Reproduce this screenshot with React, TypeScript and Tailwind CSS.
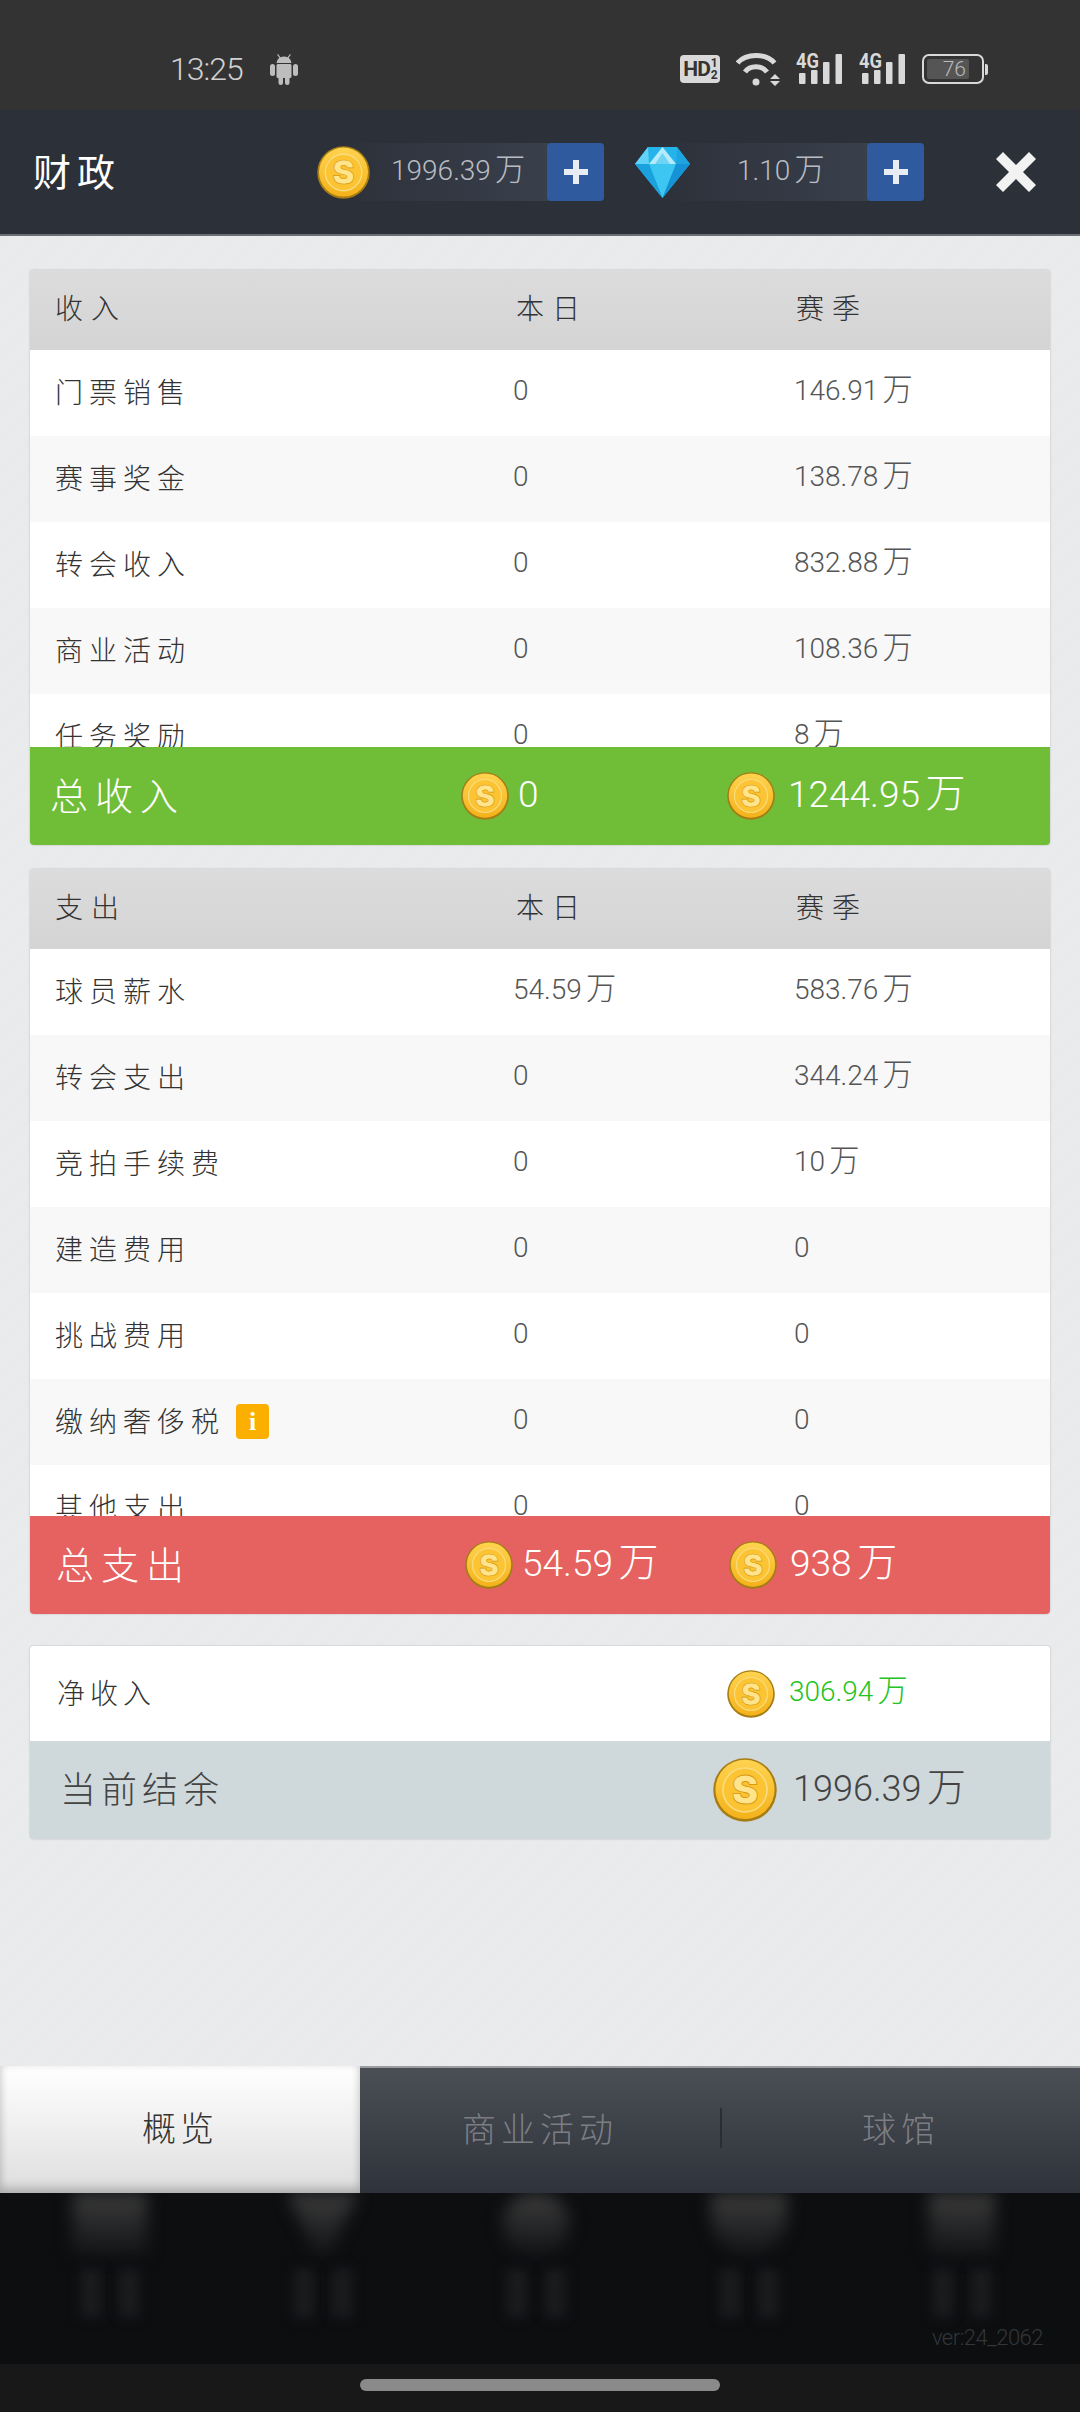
import React from 'react';

const cjk = "font-['Noto_Sans_CJK_SC',sans-serif]";
const num = "font-['Roboto','Noto_Sans_CJK_SC',sans-serif] font-light";

const incomeRows = [
  ['门票销售', '0', '146.91万'],
  ['赛事奖金', '0', '138.78万'],
  ['转会收入', '0', '832.88万'],
  ['商业活动', '0', '108.36万'],
  ['任务奖励', '0', '8万'],
];

const spendRows = [
  ['球员薪水', '54.59万', '583.76万'],
  ['转会支出', '0', '344.24万'],
  ['竞拍手续费', '0', '10万'],
  ['建造费用', '0', '0'],
  ['挑战费用', '0', '0'],
  ['缴纳奢侈税', '0', '0'],
  ['其他支出', '0', '0'],
];

const Coin: React.FC<{ size: number }> = ({ size }) => (
  <svg width={size} height={size} viewBox="0 0 48 48" className="shrink-0">
    <defs>
      <linearGradient id="coinFill" x1="0" y1="0" x2="0" y2="1">
        <stop offset="0" stopColor="#ffd34f" />
        <stop offset="1" stopColor="#f4b21a" />
      </linearGradient>
    </defs>
    <circle cx="24" cy="24" r="23.8" fill="#a67c14" />
    <circle cx="24" cy="23.6" r="22.2" fill="url(#coinFill)" />
    <circle cx="24" cy="24" r="16.5" fill="#fcc433" stroke="#f8dc82" strokeWidth="1.2" />
    <text x="24" y="34.5" textAnchor="middle" fontSize="30" fontWeight="900" fontFamily="Inter, sans-serif" fill="#ffe48c" stroke="#d8980f" strokeWidth="0.6">S</text>
  </svg>
);

const Gem = () => (
  <svg width="55" height="52" viewBox="0 0 55 52" className="shrink-0">
    <polygon points="13,1 42,1 55,18 27.5,52 0,18" fill="#25b4ea" />
    <polygon points="13,1 0,18 14,18" fill="#62d3f6" />
    <polygon points="42,1 55,18 41,18" fill="#1ea5e0" />
    <polygon points="27.5,1 14,18 41,18" fill="#b5ebfb" />
    <polygon points="27.5,7 20,18 35,18" fill="#6fd4f4" />
    <polygon points="14,18 41,18 27.5,52" fill="#3ec6f2" />
    <polygon points="0,18 14,18 27.5,52" fill="#1aa2df" />
    <polygon points="41,18 55,18 27.5,52" fill="#1593d4" />
  </svg>
);

const AndroidIcon = () => (
  <svg width="28" height="32" viewBox="0 0 28 32" fill="#bdbdbd" className="shrink-0">
    <path d="M8 1l2.4 3.2a9 9 0 0 1 7.2 0L20 1l.9.7-2.2 3A7.6 7.6 0 0 1 21.5 10h-15a7.6 7.6 0 0 1 2.8-5.3l-2.2-3z" />
    <rect x="6.5" y="11" width="15" height="14" rx="1.5" />
    <rect x="0" y="11" width="5" height="12" rx="2.5" />
    <rect x="23" y="11" width="5" height="12" rx="2.5" />
    <rect x="8.5" y="23" width="4.5" height="9" rx="2.2" />
    <rect x="15" y="23" width="4.5" height="9" rx="2.2" />
  </svg>
);

const PlusButton = () => (
  <div className="w-[57px] h-[58px] rounded-[4px] bg-[#2f5a9e] flex items-center justify-center shrink-0">
    <svg width="24" height="24" viewBox="0 0 24 24">
      <path d="M9 0h6v9h9v6h-9v9H9v-9H0V9h9z" fill="#e8edf5" />
    </svg>
  </div>
);

const Amount: React.FC<{ value: string; className?: string }> = ({ value, className }) => {
  const hasUnit = value.endsWith('万');
  return (
    <span className={`${num} whitespace-nowrap leading-none ${className ?? ''}`}>
      {hasUnit ? value.slice(0, -1) : value}
      {hasUnit && <span className="ml-[0.14em] text-[1.08em]">万</span>}
    </span>
  );
};

const Wallet: React.FC<{ icon: React.ReactNode; value: string; textPad: string }> = ({ icon, value, textPad }) => (
  <div className="flex items-center">
    <div className="relative z-10">{icon}</div>
    <div className="flex w-[259px] h-[58px] items-center justify-between bg-gradient-to-r from-[#2d313a] to-[#3c4451] rounded-r-[4px] -ml-[25px]">
      <Amount value={value} className={`${textPad} pb-[4px] text-[28px] text-[#b9bdc3]`} />
      <PlusButton />
    </div>
  </div>
);

const StatusIcons = () => (
  <div className="flex items-center gap-[16px] text-[#d9d9d9]">
    <div className="w-[40px] h-[28px] bg-[#d9d9d9] rounded-[4px] flex items-center justify-center text-[#333] font-['Roboto',sans-serif] font-bold text-[21px] leading-none tracking-[-1px]">
      HD<span className="flex flex-col text-[12px] leading-[12px] ml-[1px]"><span>1</span><span>2</span></span>
    </div>
    <svg width="44" height="33" viewBox="0 0 44 33" fill="none" stroke="#d9d9d9" strokeWidth="5">
      <path d="M1.5 10C10 0 30 0 38.5 10" />
      <path d="M9 19C14 12 26 12 31 19" />
      <circle cx="20" cy="29" r="3.5" fill="#d9d9d9" stroke="none" />
      <path d="M34 26l5-5 5 5zM34 28l5 5 5-5z" fill="#d9d9d9" stroke="none" />
    </svg>
    {[0, 1].map((i) => (
      <svg key={i} width="46" height="32" viewBox="0 0 46 32" className="mr-[1px] overflow-visible">
        <text x="0" y="15" fontSize="21" fontWeight="700" fontFamily="Roboto, sans-serif" fill="#d9d9d9" textLength="23" lengthAdjust="spacingAndGlyphs">4G</text>
        <rect x="3" y="20" width="6.5" height="11" rx="1" fill="#d9d9d9" />
        <rect x="15" y="17" width="6.5" height="14" rx="1" fill="#d9d9d9" />
        <rect x="27" y="9" width="6.5" height="22" rx="1" fill="#d9d9d9" />
        <rect x="39.5" y="1" width="6.5" height="30" rx="1" fill="#d9d9d9" />
      </svg>
    ))}
    <div className="flex items-center">
      <div className="w-[62px] h-[30px] border-[2px] border-[#d9d9d9] rounded-[7px] p-[3px] flex">
        <div className="w-[42px] bg-[#555] rounded-[2px] flex items-center justify-end pr-[3px] text-[#bbb] font-['Roboto',sans-serif] font-light text-[21px] leading-none">76</div>
      </div>
      <div className="w-[3px] h-[11px] bg-[#d9d9d9] rounded-r-[2px] ml-[1px]" />
    </div>
  </div>
);

const Row: React.FC<{ cells: string[]; odd: boolean; info?: boolean }> = ({ cells, odd, info }) => (
  <div className={`grid grid-cols-[483px_281px_1fr] items-center h-[86px] shrink-0 pb-[5px] ${odd ? 'bg-[#f8f8f8]' : 'bg-white'}`}>
    <div className={`${cjk} font-light pl-[25px] text-[28px] tracking-[6px] text-[#333] flex items-center leading-none`}>
      {cells[0]}
      {info && <div className="ml-[11px] mt-[4px] w-[33px] h-[35px] rounded-[4px] bg-[#fbb000] flex items-center justify-center text-white font-['Liberation_Serif',serif] font-bold text-[26px] tracking-normal">i</div>}
    </div>
    <Amount value={cells[1]} className="text-[28px] text-[#555]" />
    <Amount value={cells[2]} className="text-[28px] text-[#555]" />
  </div>
);

const TableHeader: React.FC<{ title: string }> = ({ title }) => (
  <div className={`${cjk} grid grid-cols-[486px_280px_1fr] items-center h-[80px] pb-[6px] bg-gradient-to-b from-[#dcdcdc] to-[#d4d4d4] text-[#333] text-[28px] tracking-[8px] leading-none font-light`}>
    <span className="pl-[25px]">{title}</span>
    <span>本日</span>
    <span>赛季</span>
  </div>
);

const TotalBar: React.FC<{ label: string; color: string; cols: string; today: string; season: string; pad: string }> = ({ label, color, cols, today, season, pad }) => (
  <div className={`grid ${cols} items-center h-[98px] shrink-0 ${color} text-white`}>
    <span className={`${cjk} ${pad} tracking-[7px] pb-[5px] font-light text-[38px] leading-none`}>{label}</span>
    <div className="flex items-center gap-[9px]">
      <Coin size={48} />
      <Amount value={today} className="text-[37px] pb-[4px]" />
    </div>
    <div className="flex items-center gap-[13px]">
      <Coin size={48} />
      <Amount value={season} className="text-[37px] pb-[4px]" />
    </div>
  </div>
);

const Card: React.FC<{ children: React.ReactNode; className?: string }> = ({ children, className }) => (
  <section className={`rounded-[4px] overflow-hidden shadow-[0_0_2px_rgba(0,0,0,0.25)] ${className ?? ''}`}>{children}</section>
);

const BlurItem: React.FC<{ shape: string }> = ({ shape }) => (
  <div className="w-[213px] flex flex-col items-center shrink-0">
    <div className="blur-[8px]">
      <div className={`${shape} h-[62px] bg-gradient-to-b from-[#3c3c3c] to-[#141517]`} />
    </div>
    <div className="flex gap-[18px] mt-[14px]">
      <div className="w-[20px] h-[48px] bg-[#1b1c1e] blur-[6px]" />
      <div className="w-[20px] h-[48px] bg-[#1b1c1e] blur-[6px]" />
    </div>
  </div>
);

export default function App() {
  return (
    <div className="w-[1080px] h-[2412px] flex flex-col overflow-hidden bg-[#e8eaec]">
      <div className="h-[110px] shrink-0 bg-[#333333] flex items-center pl-[170px] pr-[92px] pt-[28px]">
        <span className="w-[71px] font-['Roboto',sans-serif] font-light text-[32px] tracking-[-1px] text-[#d0d0d0] leading-none whitespace-nowrap">13:25</span>
        <div className="ml-[29px]">
          <AndroidIcon />
        </div>
        <div className="ml-auto">
          <StatusIcons />
        </div>
      </div>

      <header className="h-[126px] shrink-0 bg-[#2c3039] border-b-2 border-[#6a6d72] flex items-center pl-[33px]">
        <span className={`${cjk} w-[284px] pb-[5px] text-white text-[38px] tracking-[6px] leading-none`}>财政</span>
        <Wallet icon={<Coin size={53} />} value="1996.39万" textPad="pl-[46px]" />
        <div className="ml-[31px]">
          <Wallet icon={<Gem />} value="1.10万" textPad="pl-[72px]" />
        </div>
        <svg width="40" height="40" viewBox="0 0 40 40" className="ml-[72px]">
          <path d="M0 7L7 0l13 13L33 0l7 7-13 13 13 13-7 7-13-13L7 40l-7-7 13-13z" fill="#f2f2f2" />
        </svg>
      </header>

      <main className="flex-1 px-[30px] pt-[34px] flex flex-col bg-[#e8eaec] bg-[repeating-linear-gradient(135deg,#e8eaec_0,#e8eaec_10px,#e9ebed_10px,#e9ebed_20px)]">
        <Card>
          <TableHeader title="收入" />
          <div className="h-[397px] overflow-hidden">
            {incomeRows.map((r, i) => (
              <Row key={r[0]} cells={r} odd={i % 2 === 1} />
            ))}
          </div>
          <TotalBar label="总收入" color="bg-[#70bd37]" cols="grid-cols-[431px_266px_1fr]" today="0" season="1244.95万" pad="pl-[20px]" />
        </Card>

        <Card className="mt-[24px]">
          <TableHeader title="支出" />
          <div className="h-[567px] overflow-hidden">
            {spendRows.map((r, i) => (
              <Row key={r[0]} cells={r} odd={i % 2 === 1} info={r[0] === '缴纳奢侈税'} />
            ))}
          </div>
          <TotalBar label="总支出" color="bg-[#e56260]" cols="grid-cols-[435px_264px_1fr]" today="54.59万" season="938万" pad="pl-[26px]" />
        </Card>

        <Card className="mt-[32px]">
          <div className="h-[95px] bg-white grid grid-cols-[697px_1fr] items-center">
            <span className={`${cjk} font-light pl-[27px] pb-[3px] text-[28px] tracking-[5px] text-[#333] leading-none`}>净收入</span>
            <div className="flex items-center gap-[14px]">
              <Coin size={48} />
              <Amount value="306.94万" className="text-[28px] pb-[4px] text-[#22c322]" />
            </div>
          </div>
          <div className="h-[98px] bg-[#cfd8db] grid grid-cols-[683px_1fr] items-center">
            <span className={`${cjk} font-light pl-[30px] pb-[7px] text-[36px] tracking-[5px] text-[#444] leading-none`}>当前结余</span>
            <div className="flex items-center gap-[16px]">
              <Coin size={64} />
              <Amount value="1996.39万" className="text-[36px] pb-[4px] text-[#444]" />
            </div>
          </div>
        </Card>
      </main>

      <nav className={`${cjk} h-[127px] shrink-0 flex font-light text-[34px] leading-none`}>
        <div className="w-[360px] pb-[6px] bg-gradient-to-b from-white to-[#dedede] shadow-[inset_0_-6px_10px_rgba(0,0,0,0.18),inset_0_0_8px_rgba(0,0,0,0.08)] flex items-center justify-center text-[#333] tracking-[4px]">概览</div>
        <div className="flex-1 pb-[6px] flex items-center border-t-2 border-[#9a9c9f] bg-gradient-to-b from-[#4a4e55] to-[#2f333b] text-[#7c7e83] tracking-[5px]">
          <div className="w-[360px] text-center">商业活动</div>
          <div className="w-[2px] h-[40px] bg-[#2a2d33]" />
          <div className="flex-1 text-center">球馆</div>
        </div>
      </nav>

      <div className="relative h-[171px] shrink-0 bg-[#0c0e10] overflow-hidden flex pl-[3px]">
        <BlurItem shape="w-[74px]" />
        <BlurItem shape="w-[70px] [clip-path:polygon(0_0,100%_0,60%_100%,40%_100%)]" />
        <BlurItem shape="w-[66px] rounded-[30px]" />
        <BlurItem shape="w-[76px] rounded-b-[40px]" />
        <BlurItem shape="w-[66px]" />
        <span className="absolute right-[37px] bottom-[15px] font-['Roboto',sans-serif] font-light text-[22px] tracking-[-0.5px] leading-none text-[#33363a]">ver:24_2062</span>
      </div>

      <div className="h-[48px] shrink-0 bg-[#181818] flex justify-center pt-[15px]">
        <div className="w-[360px] h-[12px] rounded-full bg-[#8a8a8a]" />
      </div>
    </div>
  );
}
